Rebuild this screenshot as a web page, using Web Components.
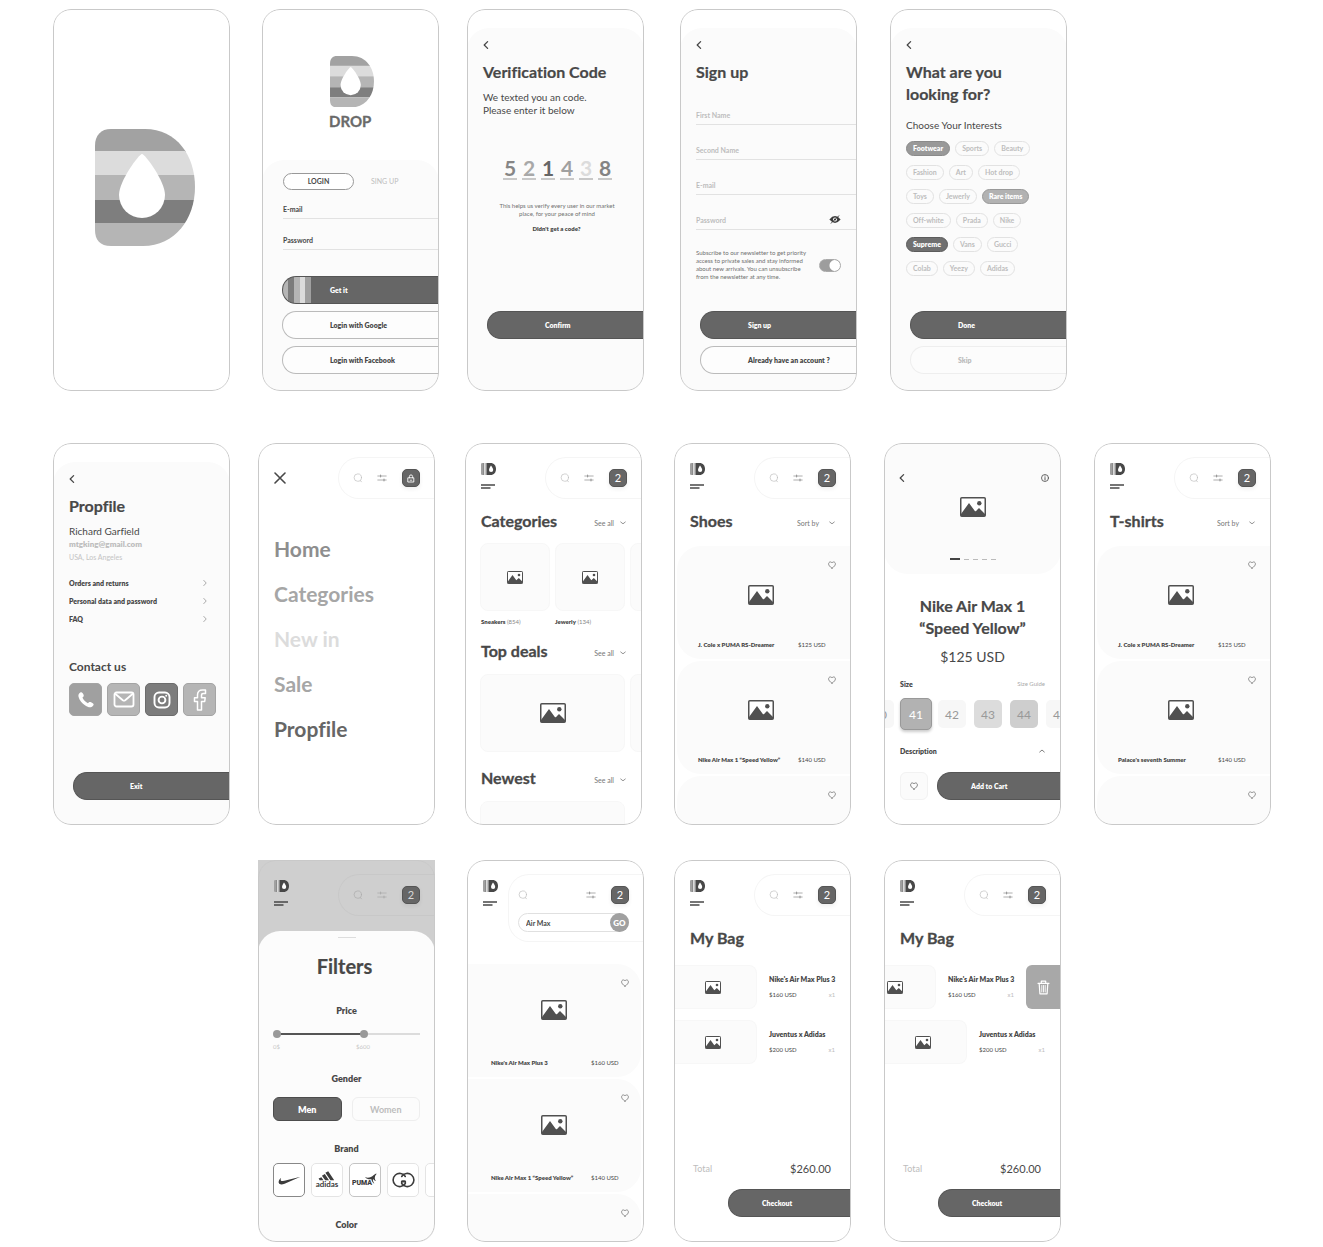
<!DOCTYPE html>
<html lang="en">
<head>
<meta charset="utf-8">
<title>Drop – mobile wireframes</title>
<style>
:root{--ink:#484848;--dark:#666;--mid:#a0a0a0;--soft:#b5b5b5;--deep:#7c7c7c;--pale:#dcdcdc;--mute:#bdbdbd;--panel:#fbfbfb;--line:#e2e2e2}
body{margin:0;background:#fff;color:var(--ink);font-family:Lato,"Open Sans",sans-serif;font-variant-ligatures:none}
</style>
</head>
<body>
<wire-board></wire-board>
<script>
const base = `
*{box-sizing:border-box}
h1,h2,h3,p{margin:0}
:host{display:block;box-sizing:border-box}
button,input,select{font:inherit;color:inherit;border:0;margin:0;padding:0;background:none;border-radius:0;outline:0}
button,a,select{cursor:pointer}
a{color:inherit;text-decoration:none}
svg{display:block}
`;
function define(tag, css, html){
  customElements.define(tag, class extends HTMLElement{
    constructor(){
      super();
      this.attachShadow({mode:'open'});
    }
    connectedCallback(){
      if(this.shadowRoot.childNodes.length) return;
      const t = document.createElement('template');
      t.innerHTML = '<style>' + base + css + '</style>' + (typeof html === 'function' ? html(n => this.getAttribute(n) || '') : html);
      this.shadowRoot.append(t.content.cloneNode(true));
    }
  });
}

/* ---------- icons ---------- */
const st = (w, c) => `fill="none" stroke="${c || 'currentColor'}" stroke-width="${w}" stroke-linecap="round" stroke-linejoin="round"`;
const dropPath = 'M47 25C44 25 24 52 24 66A23 23 0 0 0 70 66C70 52 50 25 47 25Z';
const icons = {
  back: `<svg width="6" height="12" viewBox="0 0 6 12"><path d="M4.6 2.6L1.2 6L4.6 9.4" ${st(1.3)}/></svg>`,
  next: `<svg width="4" height="8" viewBox="0 0 4 8"><path d="M.8 1.4L3.2 4L.8 6.6" ${st(.7)}/></svg>`,
  down: `<svg width="6" height="4" viewBox="0 0 6 4"><path d="M.7 1L3 2.8L5.3 1" ${st(.8)}/></svg>`,
  up: `<svg width="6" height="4" viewBox="0 0 6 4"><path d="M.7 3L3 1L5.3 3" ${st(.7)}/></svg>`,
  close: `<svg width="12" height="12" viewBox="0 0 12 12"><path d="M1 1L11 11M11 1L1 11" ${st(1.6)}/></svg>`,
  search: `<svg width="10" height="10" viewBox="0 0 10 10"><circle cx="4.8" cy="4.6" r="3.7" ${st(.7)}/><path d="M7.2 7.4L8.4 8.8" ${st(.8)}/></svg>`,
  filter: `<svg width="10" height="8" viewBox="0 0 10 8"><path d="M.8 2H9.2M.8 6H9.2" ${st(.8)}/><path d="M3.6 1.2V2.8M7 5.2V6.8" ${st(1.2)}/></svg>`,
  lock: `<svg width="8" height="9" viewBox="0 0 8 9"><path d="M1.2 3.8H6.8V8H1.2ZM2.4 3.8V2.500A1.600 1.600 0 0 1 5.600 2.500V3.800" ${st(.9)}/><path d="M3.200 6.200H4.800" ${st(.8)}/></svg>`,
  menu: `<svg width="15" height="5" viewBox="0 0 15 5"><path d="M0 1H14M0 4H9.500" fill="none" stroke="currentColor" stroke-width="1.400"/></svg>`,
  heart: `<svg width="8" height="8" viewBox="0 0 8 8"><path d="M4 7.200C1.600 5.600 .6 4.200 .6 2.900C.6 .8 3.100 .2 4 2C4.900 .2 7.400 .8 7.400 2.900C7.400 4.200 6.400 5.600 4 7.200Z" ${st(.8)}/></svg>`,
  info: `<svg width="8" height="8" viewBox="0 0 8 8"><circle cx="4" cy="4" r="3.500" ${st(.8)}/><path d="M4 3.600V6M4 2V2.200" ${st(.9)}/></svg>`,
  eye: `<svg width="12" height="9" viewBox="0 0 12 9"><path d="M.4 4.500Q6 -2.300 11.600 4.500Q6 11.300 .4 4.500Z" fill="#3c3c3c"/><circle cx="6" cy="4.500" r="2" fill="#fbfbfb"/><circle cx="6" cy="4.500" r="1.100" fill="#3c3c3c"/><path d="M1.600 8.600L10.400 .4" stroke="#3c3c3c" stroke-width=".8"/></svg>`,
  phone: `<svg width="18" height="18" viewBox="0 0 18 18"><path d="M3.200 1.600C4.500 .6 5.600 1.300 6.600 3.700C7 4.800 6.700 5.500 5.400 6.600C6.500 9 8.300 10.900 10.900 12.200C12.100 10.800 12.800 10.600 14.100 11.200C16.900 12.500 17.200 13.400 16 14.800C14.200 17 11.500 16.800 8.300 14.600C5 12.300 2.500 9.400 1.600 6.100C1.100 4.300 1.500 2.800 3.200 1.600Z" fill="#fff"/></svg>`,
  mail: `<svg width="22" height="17" viewBox="0 0 22 17"><rect x="1.500" y="1.500" width="19" height="14" rx="2" ${st(1.8, '#fff')}/><path d="M2.500 3L9.800 9.200Q11 10.100 12.200 9.200L19.500 3" ${st(1.8, '#fff')}/></svg>`,
  insta: `<svg width="18" height="18" viewBox="0 0 18 18"><rect x="1.500" y="1.500" width="15" height="15" rx="4.500" ${st(1.9, '#fff')}/><circle cx="9" cy="9" r="3.400" ${st(1.9, '#fff')}/><circle cx="13.200" cy="4.800" r="1" fill="#fff"/></svg>`,
  face: `<svg width="14" height="22" viewBox="0 0 14 22"><path d="M4.500 21V12.500H1.500V8.700H4.500V6C4.500 2.700 6.500 1 9.300 1H12.500V4.600H10.300C9 4.600 8.500 5.200 8.500 6.300V8.700H12.200L11.700 12.500H8.500V21Z" ${st(1.5, '#fff')}/></svg>`,
  trash: `<svg width="13" height="15" viewBox="0 0 13 15"><path d="M1 3.300H12M4.300 3V1.200H8.700V3M2.200 3.600L2.900 13.800H10.100L10.800 3.600" ${st(1.2, '#fff')}/><path d="M4.800 5.500V12M6.500 5.500V12M8.200 5.500V12" ${st(.9, '#fff')}/></svg>`,
  pic: `<svg width="26" height="20" viewBox="0 0 26 20"><rect x=".75" y=".75" width="24.500" height="18.500" rx="1" fill="#fff" stroke="#505050" stroke-width="1.500"/><circle cx="19.300" cy="6.300" r="2.200" fill="#505050"/><path d="M1 17L9 6L15 14.200Q16 14.600 17 13L19 11L25 17V19H1Z" fill="#505050"/></svg>`,
  picsmall: `<svg width="16" height="13" viewBox="0 0 16 13"><rect x=".5" y=".5" width="15" height="12" rx=".7" fill="#fff" stroke="#505050"/><circle cx="12" cy="4" r="1.300" fill="#505050"/><path d="M.5 11L5.500 4L9.300 9.200L11.800 7L15.500 10.700V12.500H.5Z" fill="#505050"/></svg>`,
  logo: `<svg width="15" height="12" viewBox="0 0 15 12"><path d="M1.200 0H2V12H1.200Q0 12 0 10.800V1.200Q0 0 1.200 0Z" fill="#a0a0a0"/><path d="M2 0H3V12H2Z" fill="#8c8c8c"/><path d="M3 0H4.200V12H3Z" fill="#dcdcdc"/><path d="M4.200 0H5.500V12H4.200Z" fill="#b5b5b5"/><path d="M5.500 0H9.500C13 0 15 2.600 15 6S13 12 9.500 12H5.500Z" fill="#484848"/><path d="M10 2.400C9.500 3 8 5.300 8 6.900A2.100 2.100 0 0 0 12.200 6.900C12.200 5.300 10.500 3 10 2.400Z" fill="#fff"/></svg>`,
  nike: `<svg width="23" height="9" viewBox="0 0 23 9"><path d="M22.500 .8L6.600 7.700C3.600 9 1.200 8.500 .7 6.800C.3 5.300 1.300 3.400 3 1.700C2.200 3.700 2.600 5.300 5 5.100C5.800 5 6.600 4.800 7.400 4.600Z" fill="#3c3c3c"/></svg>`,
  adidas: `<svg width="24" height="18" viewBox="0 0 24 18"><path d="M10.400 1.800L13.200 .3L19.200 9.300H15.400ZM6.900 4.700L9.800 3.100L14 9.300H10.200ZM3.600 7.600L6.400 6.200L8.500 9.300H4.700Z" fill="#3c3c3c"/><text x="12" y="16" text-anchor="middle" font-family="Lato" font-weight="700" font-size="8" fill="#3c3c3c">adidas</text></svg>`,
  puma: `<svg width="26" height="16" viewBox="0 0 26 16"><text x="10" y="13" text-anchor="middle" font-family="Roboto" font-weight="900" font-size="7" fill="#3c3c3c">PUMA</text><path d="M13 5.200C16.500 6.400 19.500 5.200 21.500 3.200C22.600 2.100 24 1.300 24.800 1.800C23.800 3 23.200 3.400 22.900 5C22.600 6.600 23 7.600 23.900 9C22.600 8.600 21.800 7.800 21.300 6.900C20.600 7.500 20.700 8.600 22.300 11.800C20.900 11 19.900 9.300 19.300 7.200C17 7.500 14.500 6.900 13 5.200Z" fill="#3c3c3c"/></svg>`,
  gucci: `<svg width="23" height="16" viewBox="0 0 23 16"><path d="M13.300 4.500A6.600 6.600 0 1 0 13.300 11.500V9.400H10.600" ${st(1.6, '#3c3c3c')}/><path d="M9.700 4.500A6.600 6.600 0 1 1 9.700 11.500V9.400H12.400" ${st(1.6, '#3c3c3c')}/></svg>`
};
define('ui-icon', ':host{display:block;flex:none}', a => icons[a('name')]);

let uid = 0;
define('drop-mark', 'svg{width:var(--w,100px);height:auto}', () => {
  const id = 'd' + (uid++);
  return `<svg viewBox="0 0 100 117"><clipPath id="${id}"><path d="M16 0H50C82 0 100 27 100 58C100 90 80 117 48 117H16C5 117 0 111 0 101V17C0 6 6 0 16 0Z"/></clipPath>
  <g clip-path="url(#${id})"><path fill="#a2a2a2" d="M0 0H100V23H0Z"/><path fill="#dcdcdc" d="M0 22H100V46H0Z"/><path fill="#b5b5b5" d="M0 46H100V71H0Z"/><path fill="#7e7e7e" d="M0 71H100V94H0Z"/><path fill="#b5b5b5" d="M0 94H100V117H0Z"/></g>
  <path d="${dropPath}" fill="#fff"/></svg>`;
});

/* ---------- shared parts ---------- */
define('phone-frame', `
:host{position:relative;display:flex;flex-direction:column;width:177px;height:382px;border-radius:18px;overflow:hidden;background:#fff}
:host::after{content:"";position:absolute;inset:0;border:1px solid #c9c9c9;border-radius:18px;pointer-events:none}
:host([dimmed]){background:#cfcfcf;border-radius:0 0 18px 18px}
::slotted(*){flex:1;min-height:0}`, '<slot></slot>');

define('pill-button', `
button{display:block;width:100%;height:28px;padding-left:var(--inset,47px);border-radius:14px 0 0 14px;border:1px solid #555;border-right:0;background:var(--dark);color:#fff;font-size:7px;font-weight:800;line-height:12px;text-align:left;white-space:nowrap}
:host([kind=outline]) button{background:#fdfdfd;border-color:#bbb;color:var(--ink)}
:host([kind=ghost]) button{background:#fcfcfc;border-color:#eee;color:var(--mute)}
:host([kind=striped]) button{background:linear-gradient(90deg,#b5b5b5 5px,#7c7c7c 5px 11px,#b5b5b5 11px 17px,#dcdcdc 17px 22px,#a0a0a0 22px 28px,var(--dark) 28px)}`,
'<button type="button"><slot></slot></button>');

define('line-field', `
:host{position:relative}
label{display:block;font-size:7px;font-weight:700;line-height:10px;color:var(--tone,var(--ink))}
input{display:block;width:100%;height:5px;border-bottom:1px solid var(--line)}
::slotted(*){position:absolute;right:16px;top:0}`,
a => `<label for="f">${a('label')}</label><input id="f" type="${a('type') || 'text'}"><slot></slot>`);

define('back-sheet', `
:host{display:flex;flex-direction:column;margin-top:19px;border-radius:22px 22px 0 0;background:var(--panel);padding:11px 0 0 16px}
button{width:6px;height:12px}
h2{font-size:16px;font-weight:700;line-height:22px;margin-top:10px;white-space:pre-line;-webkit-text-stroke:.2px}`,
a => `<button type="button" aria-label="Back"><ui-icon name="back"></ui-icon></button><h2>${a('heading')}</h2><slot></slot>`);

define('tool-pill', `
:host{width:97px;height:42px;border:1px solid #f5f5f5;border-right:0;border-radius:21px 0 0 21px;padding:11px 15px 0 14px}
:host([open]){width:136px;height:68px;padding-left:9px}
.row{display:flex;align-items:center;height:18px;color:#c0c0c0}
.row button{flex:none}
.row .filter{margin-left:14px;color:#999}
:host([open]) .row .filter{margin-left:auto}
.row .bag{display:grid;place-items:center;width:18px;height:18px;margin-left:auto;border-radius:5px;background:var(--dark);border:1px solid #555;color:#fff;font-size:11px;line-height:16px;box-shadow:0 2px 4px #0001}
:host([open]) .row .bag{margin-left:15px}
:host([quiet]){border-color:#c8c8c8}
:host([quiet]) .row,:host([quiet]) .row .filter{color:#adadad}
:host([quiet]) .row .bag{color:#d8d8d8}
form{display:none}
:host([open]) form{display:flex;margin:9px 0 0;height:19px;border:1px solid #e0e0e0;border-radius:10px;background:#fff}
form input{flex:1;min-width:0;padding-left:7px;font-size:7px;font-weight:700}
form button{width:19px;height:19px;margin:-1px -1px 0 0;border-radius:50%;background:var(--mid);color:#fff;font-size:8px;font-weight:800;line-height:18px}`,
a => `<div class="row"><button type="button" aria-label="Search"><ui-icon name="search"></ui-icon></button><button type="button" class="filter" aria-label="Filters"><ui-icon name="filter"></ui-icon></button><button type="button" class="bag" aria-label="Bag">${a('count') || '<ui-icon name="lock"></ui-icon>'}</button></div>${a('query') ? `<form><input aria-label="Search term" value="${a('query')}"><button type="button">GO</button></form>` : ''}`);

define('top-bar', `
:host{display:flex;justify-content:space-between;flex:none;padding:14px 0 0 16px}
.brand{padding-top:6px}
.brand button{display:block;margin-top:9px}
.close{align-self:start;margin:15px 0 0}`,
a => (a('mode') === 'close'
  ? '<button class="close" type="button" aria-label="Close"><ui-icon name="close"></ui-icon></button><tool-pill></tool-pill>'
  : `<div class="brand"><ui-icon name="logo"></ui-icon><button type="button" aria-label="Menu"><ui-icon name="menu"></ui-icon></button></div><tool-pill count="2" ${a('query') ? `open query="${a('query')}"` : ''} ${a('mode')}></tool-pill>`));

define('section-head', `
:host{display:flex;align-items:center;justify-content:space-between;height:20px;padding:0 16px}
h2{font-size:16px;font-weight:700;line-height:20px;-webkit-text-stroke:.3px}
.more{display:flex;align-items:center;gap:6px;margin-top:3px;font-size:7px;line-height:10px;color:#777}
.sort{gap:9px}
select{appearance:none}`,
a => `<h2>${a('heading')}</h2>` + (a('more') ? `<button type="button" class="more">${a('more')}<ui-icon name="down"></ui-icon></button>` : '')
  + (a('sort') ? `<label class="more sort"><select aria-label="Sort products"><option>${a('sort')}</option></select><ui-icon name="down"></ui-icon></label>` : ''));

define('thumb-card', `
:host{display:grid;place-items:center;flex:none;background:var(--panel);border:1px solid #f7f7f7;border-radius:8px;width:var(--w,70px);height:var(--h,68px)}`,
a => a('icon') ? `<ui-icon name="${a('icon')}"></ui-icon>` : '');

define('product-card', `
:host{display:flex;flex-direction:column;flex:none;height:113px;background:var(--panel);border-radius:24px 0 0 24px;margin-left:3px}
:host([flip]){border-radius:0 24px 24px 0;margin:0 3px 0 0}
.fav{align-self:end;height:8px;margin:15px 15px 0 0;color:#777}
:host([flip]) .fav{margin-right:12px}
ui-icon.pic{align-self:center;margin:16px 6px 0 0}
:host([flip]) ui-icon.pic{margin:13px 0 3px}
.info{display:flex;margin-top:35px;padding-left:21px;font-size:6px;line-height:9px}
:host([flip]) .info{padding-left:24px}
b{width:100px;font-weight:800;white-space:nowrap}`,
a => `<button type="button" class="fav" aria-label="Favourite"><ui-icon name="heart"></ui-icon></button>` + (a('name') ? `<ui-icon class="pic" name="pic"></ui-icon><div class="info"><b>${a('name')}</b><span>${a('price')}</span></div>` : ''));

define('product-list', ':host{display:flex;flex-direction:column;gap:2px;overflow:hidden;margin-top:15px}', '<slot></slot>');

define('bag-item', `
:host{display:flex;height:44px;overflow:hidden}
.img{display:grid;justify-items:end;align-items:center;flex:none;width:83px;padding-right:35px;background:var(--panel);border:1px solid #f7f7f7;border-left:0;border-radius:0 8px 8px 0}
:host([state=swiped]) .img{width:52px;padding-right:32px}
.txt{flex:1;padding:9px 16px 0 12px;font-size:7px;font-weight:800;line-height:10px;white-space:nowrap}
:host([state=swiped]) .txt{flex:none;width:90px;padding-right:12px}
.meta{display:flex;justify-content:space-between;margin-top:6px;font-size:6px;font-weight:400;line-height:9px}
.meta i{font-style:normal;color:var(--mute)}
.del{display:grid;place-items:center;flex:1;background:#a8a8a8;border-radius:6px 0 0 6px}`,
a => `<div class="img"><ui-icon name="picsmall"></ui-icon></div><div class="txt">${a('name')}<div class="meta"><span>${a('price')}</span><i>x1</i></div></div>` + (a('state') === 'swiped' ? '<button class="del" type="button" aria-label="Delete"><ui-icon name="trash"></ui-icon></button>' : ''));

/* ---------- screens ---------- */
const foot = `.foot{display:flex;flex-direction:column;gap:7px;margin-top:auto}`;

define('splash-screen', ':host{display:grid;place-items:center;padding:0 0 25px 7px}', '<drop-mark></drop-mark>');

define('login-screen', `
:host{display:flex;flex-direction:column}
drop-mark{--w:44px;margin:47px 0 0 68px}
h1{font-size:15px;line-height:18px;font-weight:700;color:#6a6a6a;margin:5px 0 0 67px;-webkit-text-stroke:.3px}
.panel{display:flex;flex-direction:column;flex:1;margin-top:30px;padding:13px 0 17px 20px;background:var(--panel);border-radius:22px 22px 0 0}
.tabs{display:flex;gap:17px;margin-left:1px;font-size:7px;line-height:15px}
.tabs button{color:var(--mute)}
.tabs .on{width:71px;height:17px;border:1px solid #999;border-radius:9px;color:var(--ink);font-weight:700;background:#fff}
line-field{margin:14px 0 0 1px}
line-field + line-field{margin-top:16px}
${foot}`,
`<drop-mark></drop-mark><h1>DROP</h1><div class="panel"><div class="tabs"><button type="button" class="on">LOGIN</button><button type="button">SING UP</button></div>
<line-field label="E-mail" type="email"></line-field><line-field label="Password" type="password"></line-field>
<div class="foot"><pill-button kind="striped">Get it</pill-button><pill-button kind="outline">Login with Google</pill-button><pill-button kind="outline">Login with Facebook</pill-button></div></div>`);

define('verify-screen', `
:host{display:flex}
back-sheet{flex:1}
.lead{font-size:10px;line-height:13px;margin-top:8px}
.code{display:flex;gap:5px;margin:39px 0 0 20px}
.code input{width:14px;height:24px;font-size:21px;text-align:center;border-bottom:2px solid #c8c8c8;font-weight:700}
.note{font-size:6px;line-height:8px;margin:22px 13px 0 0;text-align:center;color:#707070}
.again{align-self:center;font-size:6px;line-height:9px;font-weight:800;margin:6px 14px 0 0}
${foot}.foot{margin-left:4px;margin-bottom:52px;--inset:57px}`,
`<back-sheet heading="Verification Code"><p class="lead">We texted you an code.<br>Please enter it below</p>
<div class="code">${[[5,'#868686'],[2,'#a8a8a8'],[1,'#666'],[4,'#a0a0a0'],[3,'#dcdcdc'],[8,'#848484']].map((d, i) => `<input aria-label="Digit ${i + 1}" maxlength="1" value="${d[0]}" style="color:${d[1]}">`).join('')}</div>
<p class="note">This helps us verify every user in our market<br>place, for your peace of mind</p><a class="again" href="#">Didn't get a code?</a>
<div class="foot"><pill-button>Confirm</pill-button></div></back-sheet>`);

define('signup-screen', `
:host{display:flex}
back-sheet{flex:1}
line-field{--tone:var(--mute);margin-top:20px}
.first{margin-top:27px}
.news{display:flex;align-items:center;justify-content:space-between;margin:19px 16px 0 0;font-size:6px;line-height:8px;color:#707070;white-space:nowrap}
.news input{appearance:none;flex:none;width:22px;height:13px;border-radius:7px;border:1px solid #aaa;background:radial-gradient(circle at 15px 50%,#fff 5px,#9d9d9d 6px)}
${foot}.foot{margin-left:4px;margin-bottom:17px}`,
`<back-sheet heading="Sign up"><line-field class="first" label="First Name"></line-field><line-field label="Second Name"></line-field><line-field label="E-mail"></line-field><line-field label="Password" type="password"><ui-icon name="eye"></ui-icon></line-field>
<div class="news"><label for="n">Subscribe to our newsletter to get priority<br>access to private sales and stay informed<br>about new arrivals. You can unsubscribe<br>from the newsletter at any time.</label><input id="n" type="checkbox" checked></div>
<div class="foot"><pill-button>Sign up</pill-button><pill-button kind="outline">Already have an account ?</pill-button></div></back-sheet>`);

define('tag-chip', `
button{display:block;height:15px;padding:0 6px;border:1px solid #e2e2e2;border-radius:8px;color:var(--mute);font-size:7px;font-weight:700;line-height:13px;white-space:nowrap}
:host([tone]) button{color:#fff;font-weight:800}
:host([tone=mid]) button{background:#999;border-color:#8a8a8a}
:host([tone=soft]) button{background:#b2b2b2;border-color:#999}
:host([tone=dark]) button{background:#707070;border-color:#5c5c5c}`, '<button type="button"><slot></slot></button>');

define('interests-screen', `
:host{display:flex}
back-sheet{flex:1}
h3{font-size:10px;font-weight:400;line-height:13px;margin-top:14px}
.chips{display:flex;flex-direction:column;gap:9px;margin-top:9px}
.chips div{display:flex;gap:5px}
${foot}.foot{margin-left:4px;margin-bottom:17px}`,
`<back-sheet heading="What are you
looking for?"><h3>Choose Your Interests</h3><div class="chips">
<div><tag-chip tone="mid">Footwear</tag-chip><tag-chip>Sports</tag-chip><tag-chip>Beauty</tag-chip></div>
<div><tag-chip>Fashion</tag-chip><tag-chip>Art</tag-chip><tag-chip>Hot drop</tag-chip></div>
<div><tag-chip>Toys</tag-chip><tag-chip>Jewerly</tag-chip><tag-chip tone="soft">Rare items</tag-chip></div>
<div><tag-chip>Off-white</tag-chip><tag-chip>Prada</tag-chip><tag-chip>Nike</tag-chip></div>
<div><tag-chip tone="dark">Supreme</tag-chip><tag-chip>Vans</tag-chip><tag-chip>Gucci</tag-chip></div>
<div><tag-chip>Colab</tag-chip><tag-chip>Yeezy</tag-chip><tag-chip>Adidas</tag-chip></div></div>
<div class="foot"><pill-button>Done</pill-button><pill-button kind="ghost">Skip</pill-button></div></back-sheet>`);

define('profile-screen', `
:host{display:flex}
back-sheet{flex:1}
.name{font-size:10px;line-height:13px;margin-top:8px}
.mail{font-size:8px;font-weight:800;line-height:13px;color:var(--mute)}
.city{font-size:7px;line-height:13px;color:#c4c4c4}
nav{margin:10px 23px 0 0}
nav a{display:flex;justify-content:space-between;align-items:center;font-size:7px;font-weight:800;line-height:18px}
nav ui-icon{color:#888}
h3{font-size:12px;font-weight:700;line-height:16px;margin-top:31px}
.social{display:flex;gap:5px;margin-top:8px}
.social a{display:grid;place-items:center;width:33px;height:33px;border-radius:5px;background:#b5b5b5;border:1px solid #a4a4a4}
.social .a{background:#a0a0a0}.social .b{background:#7c7c7c;border-color:#6c6c6c}
${foot}.foot{margin-left:4px;margin-bottom:25px;--inset:56px}`,
`<back-sheet heading="Propfile"><p class="name">Richard Garfield</p><p class="mail">mtgking@gmail.com</p><p class="city">USA, Los Angeles</p>
<nav><a href="#">Orders and returns<ui-icon name="next"></ui-icon></a><a href="#">Personal data and password<ui-icon name="next"></ui-icon></a><a href="#">FAQ<ui-icon name="next"></ui-icon></a></nav>
<h3>Contact us</h3><div class="social"><a class="a" href="#" aria-label="Phone"><ui-icon name="phone"></ui-icon></a><a href="#" aria-label="Mail"><ui-icon name="mail"></ui-icon></a><a class="b" href="#" aria-label="Instagram"><ui-icon name="insta"></ui-icon></a><a href="#" aria-label="Facebook"><ui-icon name="face"></ui-icon></a></div>
<div class="foot"><pill-button>Exit</pill-button></div></back-sheet>`);

define('menu-screen', `
nav{display:flex;flex-direction:column;padding:27px 0 0 16px}
a{font-size:21px;font-weight:700;line-height:45px;color:#a6a6a6}
.h{color:#8e8e8e}.n{color:#dcdcdc}.p{color:#666}`,
`<top-bar mode="close"></top-bar><nav><a class="h" href="#">Home</a><a href="#">Categories</a><a class="n" href="#">New in</a><a href="#">Sale</a><a class="p" href="#">Propfile</a></nav>`);

define('categories-screen', `
section-head{margin-top:12px}
.strip{display:flex;gap:5px;overflow:hidden;margin:12px 0 0 15px}
.labels{display:flex;gap:5px;margin:7px 0 15px 16px;font-size:6px;line-height:8px}
.labels span{width:69px;color:#888}.labels b{color:var(--ink);font-weight:800}
.wide{--w:145px;--h:78px;margin-top:13px;margin-bottom:16px}
`,
`<top-bar></top-bar><section-head heading="Categories" more="See all"></section-head>
<div class="strip"><thumb-card icon="picsmall"></thumb-card><thumb-card icon="picsmall"></thumb-card><thumb-card></thumb-card></div>
<div class="labels"><span><b>Sneakers</b> (854)</span><span><b>Jewerly</b> (134)</span></div>
<section-head heading="Top deals" more="See all"></section-head>
<div class="strip wide"><thumb-card icon="pic"></thumb-card><thumb-card></thumb-card></div>
<section-head heading="Newest" more="See all"></section-head>
<div class="strip wide"><thumb-card></thumb-card></div>`);

define('shop-screen', `:host{display:flex;flex-direction:column}section-head{margin-top:12px}`,
a => `<top-bar></top-bar><section-head heading="${a('heading')}" sort="Sort by"></section-head><product-list><product-card name="J. Cole x PUMA RS-Dreamer" price="$125 USD"></product-card><product-card name="${a('second')}" price="$140 USD"></product-card><product-card></product-card></product-list>`);

define('product-screen', `
:host{display:flex;flex-direction:column}
.gallery{display:grid;grid-template:115px auto/1fr auto 1fr;align-content:start;flex:none;height:131px;padding:0 12px;background:var(--panel);border-radius:0 0 24px 24px}
.gallery button{margin:29px 0 0 3px;justify-self:start;align-self:start}
.gallery .i{justify-self:end;margin-top:31px}
.gallery ui-icon.pic{margin-top:54px}
.dots{grid-column:1/-1;display:flex;align-items:center;gap:4px;justify-content:center}
.dots i{width:5px;height:1px;background:#bbb}.dots i:first-child{width:10px;height:2px;background:#444}
h2{font-size:16px;font-weight:700;line-height:22px;text-align:center;margin-top:21px;-webkit-text-stroke:.2px}
.price{font-size:14px;line-height:20px;text-align:center;margin-top:8px}
.row{display:flex;justify-content:space-between;align-items:center;padding:0 16px;font-size:7px;line-height:10px;font-weight:800;margin-top:12px}
.row span{font-size:6px;font-weight:400;color:#aaa}
.sizes{display:flex;flex:none;gap:8px;height:36px;padding:4px 0;margin:7px 0 0 -18px}
.sizes button{flex:none;width:28px;height:28px;border-radius:5px;background:#f7f7f7;color:#999;font-size:12px}
.sizes .on{width:32px;height:32px;margin:-2px;background:#b2b2b2;border:1px solid #999;color:#fff;box-shadow:0 2px 3px #0003}
.sizes .c{background:#dcdcdc}.sizes .d{background:#cecece}
.desc{margin-top:14px}
.buy{display:flex;gap:9px;margin:auto 0 25px 16px}
.fav{display:grid;place-items:center;width:28px;height:28px;border:1px solid #f2f2f2;border-radius:6px;background:var(--panel);color:#666}
pill-button{flex:1;--inset:33px}`,
`<div class="gallery"><button type="button" aria-label="Back"><ui-icon name="back"></ui-icon></button><ui-icon class="pic" name="pic"></ui-icon><button class="i" type="button" aria-label="Info"><ui-icon name="info"></ui-icon></button><div class="dots"><i></i><i></i><i></i><i></i><i></i></div></div>
<h2>Nike Air Max 1<br>“Speed Yellow”</h2><p class="price">$125 USD</p>
<div class="row">Size<span>Size Guide</span></div>
<div class="sizes"><button type="button">40</button><button type="button" class="on">41</button><button type="button">42</button><button type="button" class="c">43</button><button type="button" class="d">44</button><button type="button">45</button></div>
<div class="row desc">Description<ui-icon name="up"></ui-icon></div>
<div class="buy"><button class="fav" type="button" aria-label="Favourite"><ui-icon name="heart"></ui-icon></button><pill-button>Add to Cart</pill-button></div>`);

define('price-range', `
:host{display:grid}
input,.track{grid-area:1/1}
.track{height:2px;align-self:center;margin:0 0 0 4px;background:linear-gradient(90deg,#555 62%,var(--pale) 62%)}
input{appearance:none;width:100%;height:8px;background:none;pointer-events:none}
input::-webkit-slider-thumb{appearance:none;width:8px;height:8px;border-radius:50%;background:#999;pointer-events:auto}`,
'<div class="track"></div><input type="range" aria-label="Lowest price" min="0" max="1000" value="0"><input type="range" aria-label="Highest price" min="0" max="1000" value="625">');

define('filters-screen', `
:host{display:flex;flex-direction:column}
top-bar{height:71px}
.sheet{flex:1;padding:6px 15px 0;border-radius:22px 22px 0 0;background:#fcfcfc;text-align:center;overflow:hidden}
.grip{width:18px;height:1px;margin:0 auto;background:#ddd}
h2{font-size:20px;font-weight:700;line-height:24px;margin-top:16px;padding-right:4px;-webkit-text-stroke:.2px}
h3{font-size:9px;font-weight:800;line-height:12px;margin-top:27px}
price-range{margin-top:13px}
.ends{display:flex;gap:76px;margin-top:5px;font-size:6px;line-height:8px;color:#c8c8c8}
.gender{display:flex;gap:10px;margin-top:12px}
.gender button{flex:1;height:24px;border-radius:6px;border:1px solid #eee;color:var(--mute);font-size:9px;font-weight:700}
.gender .on{background:var(--dark);border-color:#4c4c4c;color:#fff;font-weight:800}
.s{margin-top:22px}
.brands{display:flex;gap:6px;margin:8px -15px 0 0;overflow:hidden}
.brands button{display:grid;place-items:center;flex:none;width:32px;height:34px;border:1px solid #e4e4e4;border-radius:5px;background:#fff}
.brands .on{border-color:#888}.brands .half{border-color:#c4c4c4}`,
`<top-bar mode="quiet"></top-bar><div class="sheet"><div class="grip"></div><h2>Filters</h2><h3>Price</h3><price-range></price-range><div class="ends"><span>0$</span><span>$600</span></div>
<h3 class="s">Gender</h3><div class="gender"><button type="button" class="on">Men</button><button type="button">Women</button></div>
<h3 class="s">Brand</h3><div class="brands"><button type="button" class="on" aria-label="Nike"><ui-icon name="nike"></ui-icon></button><button type="button" aria-label="Adidas"><ui-icon name="adidas"></ui-icon></button><button type="button" class="half" aria-label="Puma"><ui-icon name="puma"></ui-icon></button><button type="button" aria-label="Gucci"><ui-icon name="gucci"></ui-icon></button><button type="button" aria-label="More brands"></button></div>
<h3 class="s">Color</h3></div>`);

define('search-screen', `:host{display:flex;flex-direction:column}product-list{margin-top:22px}`,
`<top-bar query="Air Max"></top-bar><product-list><product-card flip name="Nike's Air Max Plus 3" price="$160 USD"></product-card><product-card flip name="Nike Air Max 1 “Speed Yellow”" price="$140 USD"></product-card><product-card flip></product-card></product-list>`);

define('bag-screen', `
:host{display:flex;flex-direction:column}
section-head{margin-top:12px;flex:none}
.items{display:flex;flex-direction:column;gap:11px;margin-top:17px}
.total{display:flex;justify-content:space-between;align-items:center;margin:auto 20px 12px 19px;font-size:9px;line-height:16px;color:var(--mute)}
.total b{font-size:11px;font-weight:400;color:var(--ink)}
pill-button{margin:0 0 25px 54px;--inset:33px}`,
a => `<top-bar></top-bar><section-head heading="My Bag"></section-head><div class="items"><bag-item state="${a('state')}" name="Nike's Air Max Plus 3" price="$160 USD"></bag-item><bag-item name="Juventus x Adidas" price="$200 USD"></bag-item></div>
<div class="total">Total<b>$260.00</b></div><pill-button>Checkout</pill-button>`);

define('wire-board', `
:host{padding:9px 0 5px;overflow:hidden}
section{display:grid;align-items:start}
.a{padding-left:53px;grid-template-columns:209fr 205fr 213fr 210fr 433fr}
.b{padding-left:53px;margin-top:52px;grid-template-columns:205fr 207fr 209fr 210fr 210fr 229fr}
.c{padding-left:53px;margin-top:35px;grid-template-columns:205fr 209fr 207fr 210fr 439fr}
.c :first-child{grid-column:2}`,
`<section class="a"><phone-frame><splash-screen></splash-screen></phone-frame><phone-frame><login-screen></login-screen></phone-frame><phone-frame><verify-screen></verify-screen></phone-frame><phone-frame><signup-screen></signup-screen></phone-frame><phone-frame><interests-screen></interests-screen></phone-frame></section>
<section class="b"><phone-frame><profile-screen></profile-screen></phone-frame><phone-frame><menu-screen></menu-screen></phone-frame><phone-frame><categories-screen></categories-screen></phone-frame><phone-frame><shop-screen heading="Shoes" second="Nike Air Max 1 “Speed Yellow”"></shop-screen></phone-frame><phone-frame><product-screen></product-screen></phone-frame><phone-frame><shop-screen heading="T-shirts" second="Palace's seventh Summer"></shop-screen></phone-frame></section>
<section class="c"><phone-frame dimmed><filters-screen></filters-screen></phone-frame><phone-frame><search-screen></search-screen></phone-frame><phone-frame><bag-screen></bag-screen></phone-frame><phone-frame><bag-screen state="swiped"></bag-screen></phone-frame></section>`);
</script>
</body>
</html>
